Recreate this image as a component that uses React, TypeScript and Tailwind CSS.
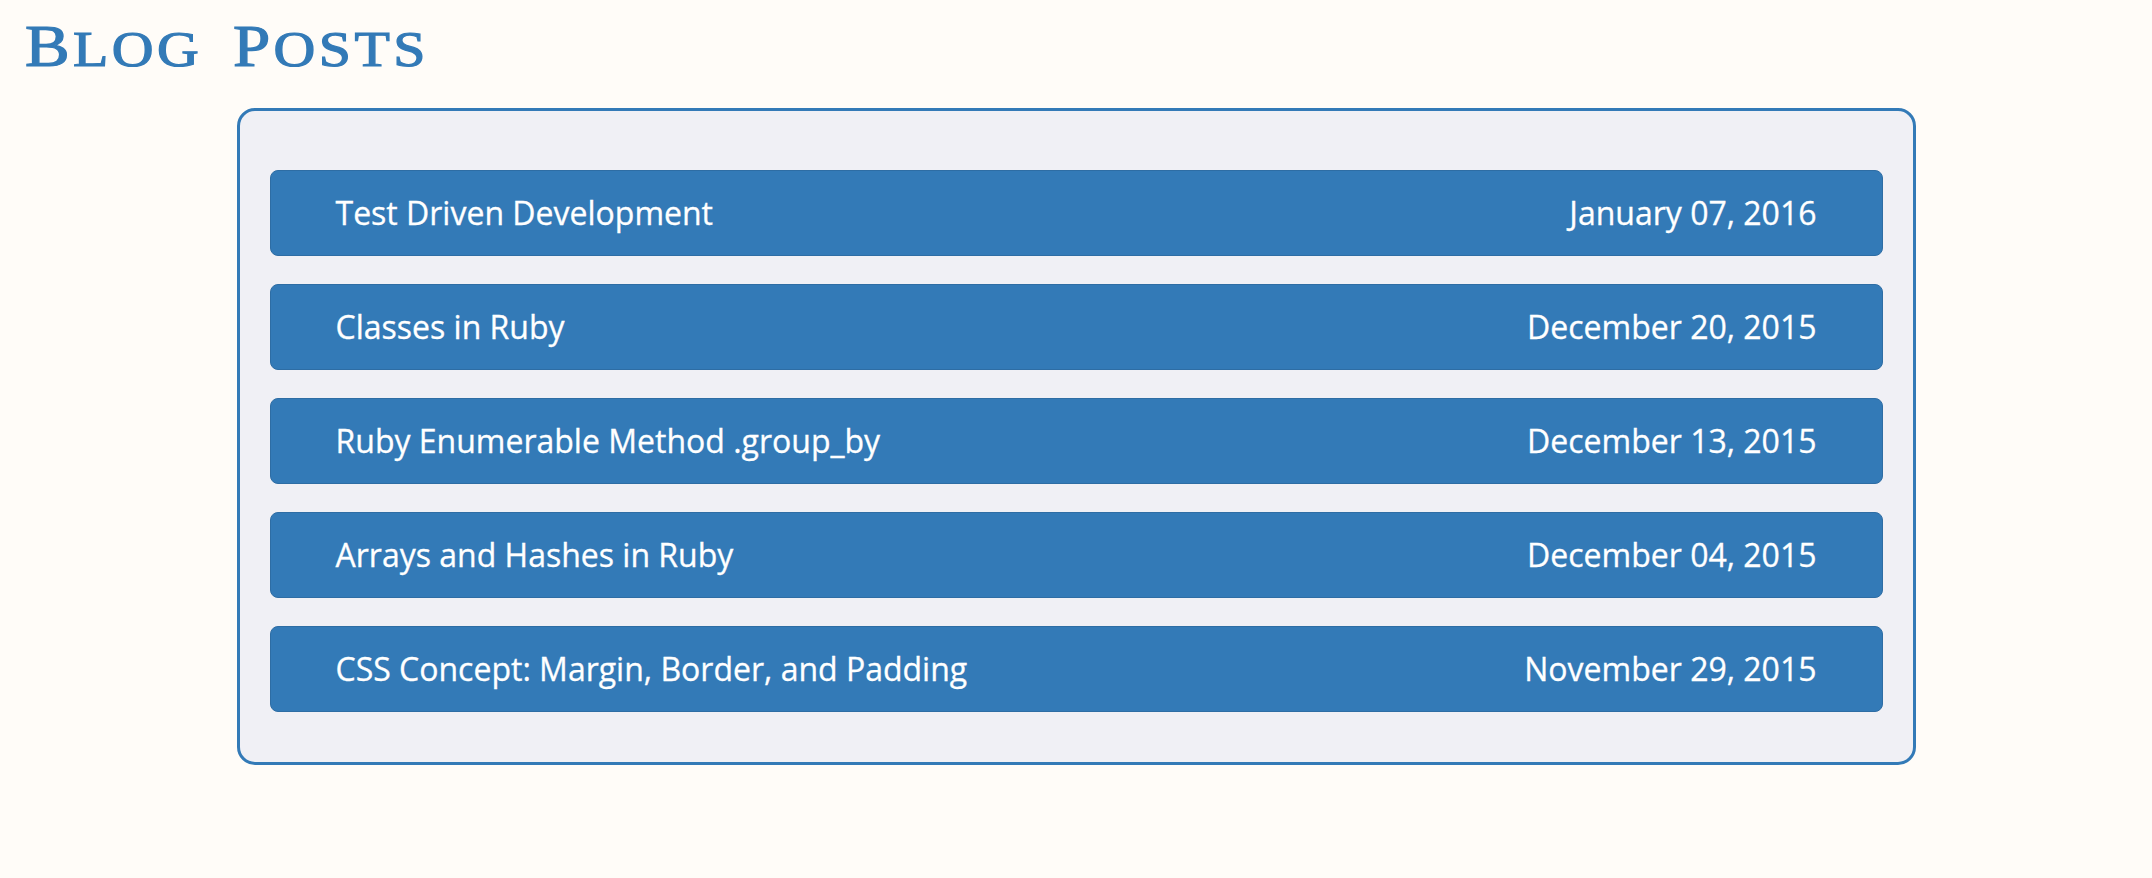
import React from "react";

const posts = [
  { title: "Test Driven Development", date: "January 07, 2016" },
  { title: "Classes in Ruby", date: "December 20, 2015" },
  { title: "Ruby Enumerable Method .group_by", date: "December 13, 2015" },
  { title: "Arrays and Hashes in Ruby", date: "December 04, 2015" },
  { title: "CSS Concept: Margin, Border, and Padding", date: "November 29, 2015" },
];

function Word({ first, rest }: { first: string; rest: string }) {
  return (
    <span>
      <span>{first}</span>
      <span className="text-[51px]">{rest}</span>
    </span>
  );
}

export default function App() {
  return (
    <div className="min-h-screen bg-[#fffcf8] pb-10">
      <h1
        className="pl-[25px] pt-[17px] h-[108px] text-[59px] font-normal text-[#337ab7] leading-none tracking-[3px] [-webkit-text-stroke:1.2px_#337ab7]"
        style={{ fontFamily: '"Liberation Serif", "DejaVu Serif", serif' }}
      >
        <span className="inline-block origin-left scale-x-[1.135]">
          <Word first="B" rest="LOG" />
          <span className="inline-block w-[27px]" />
          <Word first="P" rest="OSTS" />
        </span>
      </h1>
      <div className="mx-auto w-[1679px] h-[657px] rounded-[18px] border-[3px] border-[#337ab7] bg-[#f0f0f5] px-[30px] pt-[59px] flex flex-col gap-[28px]">
        {posts.map((p) => (
          <div
            key={p.title}
            className="h-[86px] rounded-[8px] border border-[#2e6da4] bg-[#337ab7] px-[65px] flex items-center justify-between text-white text-[32px] [-webkit-text-stroke:0.3px_#ffffff]"
            style={{ fontFamily: '"Open Sans", sans-serif' }}
          >
            <span>{p.title}</span>
            <span>{p.date}</span>
          </div>
        ))}
      </div>
    </div>
  );
}
